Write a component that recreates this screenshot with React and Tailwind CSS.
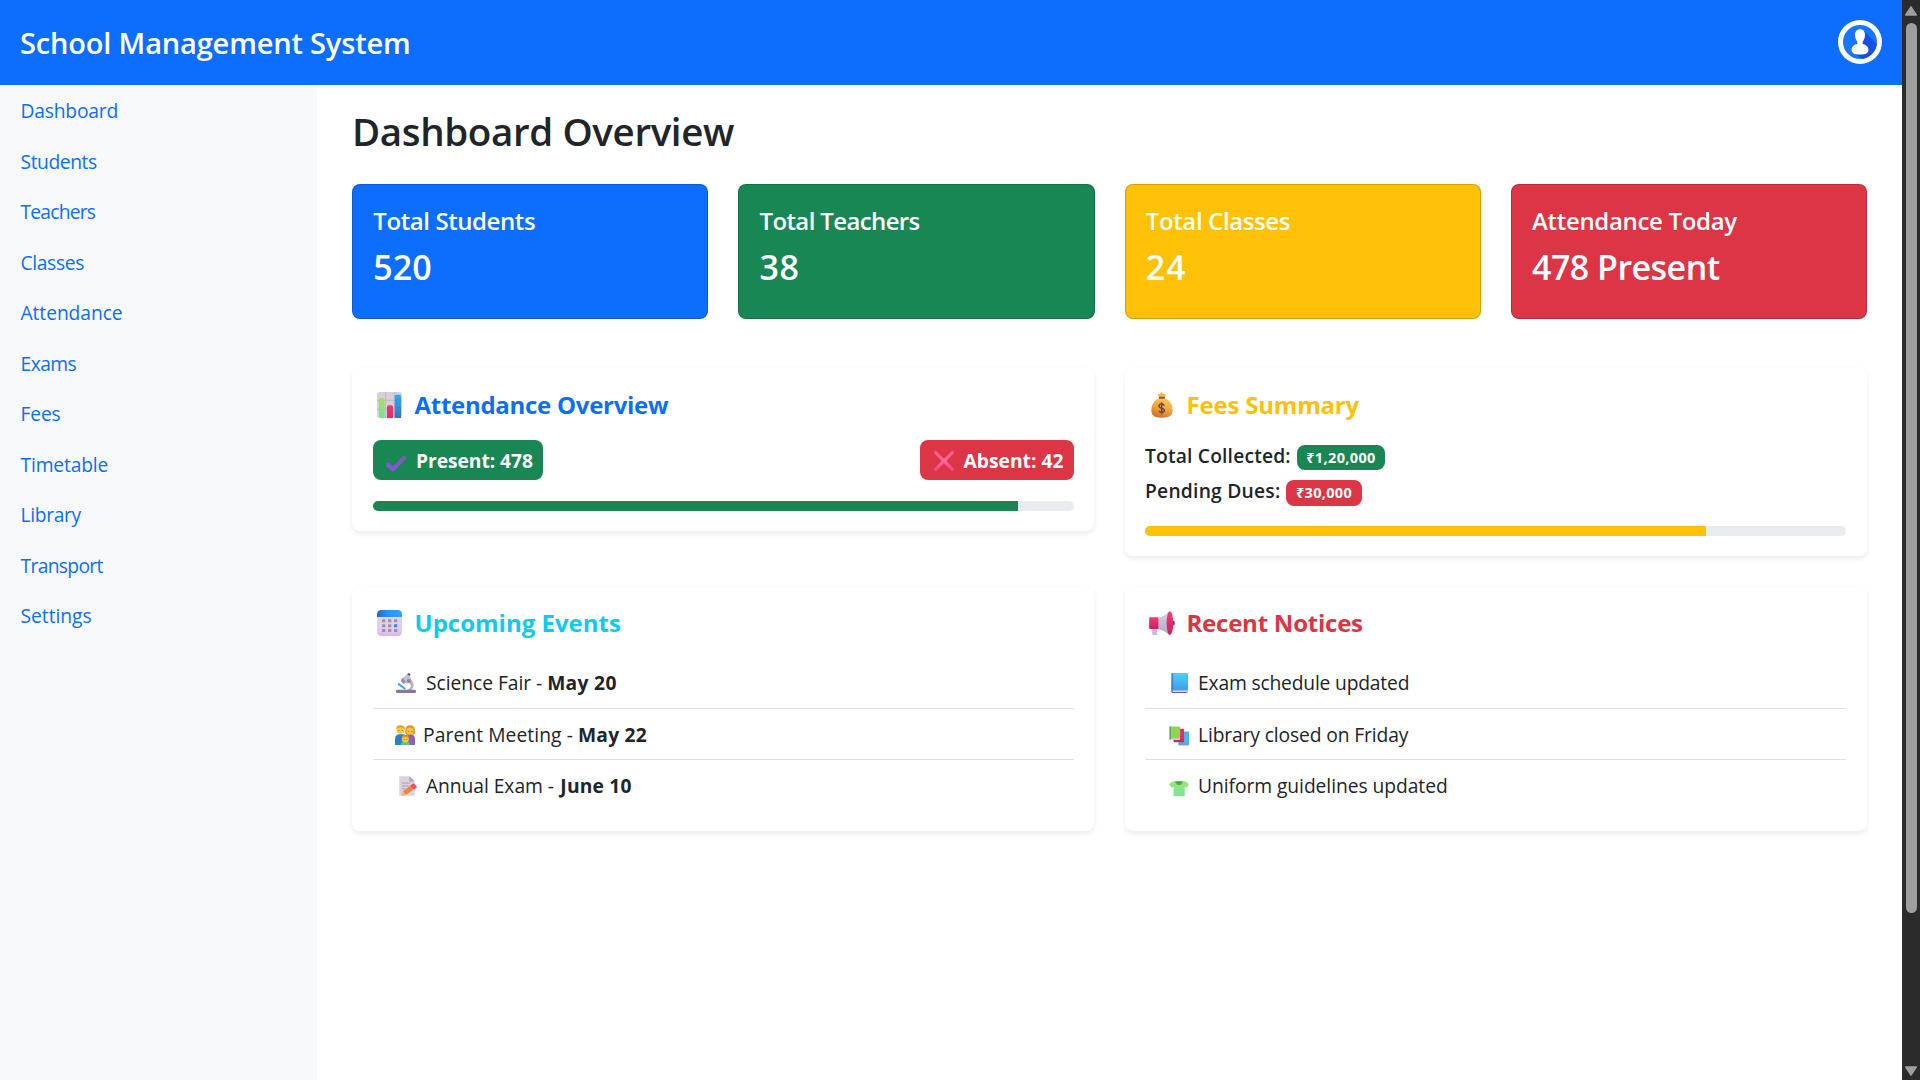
const nav = [
  ["Dashboard", "tracking-[-0.2px]"],
  ["Students", "tracking-[-0.43px]"],
  ["Teachers", "tracking-[-0.79px]"],
  ["Classes", "tracking-[-0.36px]"],
  ["Attendance", "tracking-[-0.08px]"],
  ["Exams", "tracking-[-0.57px]"],
  ["Fees", "tracking-[-0.18px]"],
  ["Timetable", "tracking-[-0.16px]"],
  ["Library", "tracking-[-0.35px]"],
  ["Transport", "tracking-[-0.67px]"],
  ["Settings", "tracking-[-0.03px]"],
];

const stats = [
  { label: "Total Students", value: "520", bg: "bg-[#0d6efd]", lt: "tracking-[-0.41px]", vt: "tracking-normal" },
  { label: "Total Teachers", value: "38", bg: "bg-[#198754]", lt: "tracking-[-0.63px]", vt: "tracking-[0.5px]" },
  { label: "Total Classes", value: "24", bg: "bg-[#ffc107]", lt: "tracking-[-0.38px]", vt: "tracking-[1px]" },
  { label: "Attendance Today", value: "478 Present", bg: "bg-[#dc3545]", lt: "tracking-[-0.32px]", vt: "tracking-[-0.54px]" },
];

function Avatar() {
  return (
    <svg className="mb-px h-11 w-11" viewBox="0 0 44 44">
      <defs>
        <clipPath id="disc"><circle cx="22" cy="22" r="17" /></clipPath>
      </defs>
      <circle cx="22" cy="22" r="22" fill="#fff" />
      <circle cx="22" cy="22" r="17" fill="#1677fb" />
      <path d="M26 11 L42 27 L32 44 L14 32 Z" fill="#1450e6" clipPath="url(#disc)" />
      <path d="M22 9.300c3.100 0 5 2.100 5 5.400 0 2.900-.9 5.200-2.300 6.700v2.600c3.200.9 5.700 2.300 5.700 5.800 0 3.600-2.600 4.700-8.400 4.700s-8.400-1.100-8.400-4.700c0-3.500 2.500-4.900 5.700-5.800v-2.600c-1.400-1.500-2.300-3.800-2.300-6.700 0-3.300 1.900-5.400 5-5.400z" fill="#fff" />
    </svg>
  );
}

function ChartIcon() {
  return (
    <svg className="ml-1 h-[26px] w-[25px]" viewBox="81 96 75 78">
      <defs>
        <linearGradient id="cg" x1="0" y1="0" x2="0" y2="1"><stop offset="0" stopColor="#b0dc55" /><stop offset="1" stopColor="#6ee894" /></linearGradient>
        <linearGradient id="cr" x1="0" y1="0" x2="0" y2="1"><stop offset="0" stopColor="#ea3a63" /><stop offset="1" stopColor="#f0256f" /></linearGradient>
        <linearGradient id="cb" x1="0" y1="0" x2="0" y2="1"><stop offset="0" stopColor="#35a7ee" /><stop offset="1" stopColor="#3573c4" /></linearGradient>
      </defs>
      <rect x="81" y="96" width="75" height="78" rx="9" fill="#d6d0dc" />
      <path d="M107 96v78M133 96v78M81 121h75M81 148h75" stroke="#b2aaba" strokeWidth="2" />
      <path d="M87 174v-55q0-5 5-5h7q5 0 5 5v55z" fill="url(#cg)" />
      <path d="M111 174v-33q0-5 5-5h8q5 0 5 5v33z" fill="url(#cr)" />
      <path d="M134 174v-65q0-5 5-5h9q5 0 5 5v65z" fill="url(#cb)" />
    </svg>
  );
}

function MoneyIcon() {
  return (
    <svg className="ml-1.5 h-[26px] w-[22px]" viewBox="94 97 66 78">
      <defs>
        <linearGradient id="mb" x1="0.7" y1="0" x2="0.3" y2="1"><stop offset="0" stopColor="#ffc94d" /><stop offset="0.55" stopColor="#eea23c" /><stop offset="1" stopColor="#d2672f" /></linearGradient>
      </defs>
      <path d="M118 114l-4-11 6 1 6-7 6 7 7-1-4 11z" fill="#f9b83c" />
      <path d="M119 116C104 121 95 136 95 152c0 16 10 22 32 22s32-6 32-22c0-16-9-31-24-36z" fill="url(#mb)" />
      <rect x="117" y="111" width="19" height="6" rx="3" fill="#87505a" />
      <path d="M134 138c-2-4-5-5-8-5-5 0-8 2-8 6 0 9 16 4 16 13 0 4-3 6-8 6-4 0-7-2-8-5M126 128v36" fill="none" stroke="#6e4649" strokeWidth="4.500" />
    </svg>
  );
}

function CalendarIcon() {
  const xs = [96, 114, 132];
  const ys = [118, 133, 147];
  return (
    <svg className="ml-1 h-[26px] w-[25px]" viewBox="81 90 75 78">
      <defs>
        <linearGradient id="ch" x1="0" y1="0" x2="1" y2="0"><stop offset="0" stopColor="#2b63c8" /><stop offset="0.400" stopColor="#2690f5" /><stop offset="1" stopColor="#35a3fb" /></linearGradient>
        <linearGradient id="cbg" x1="0" y1="0" x2="0" y2="1"><stop offset="0" stopColor="#dcd8e6" /><stop offset="0.800" stopColor="#e0cdee" /><stop offset="1" stopColor="#d9b3e8" /></linearGradient>
      </defs>
      <rect x="81" y="90" width="75" height="78" rx="13" fill="url(#cbg)" />
      <path d="M81 111v-7q0-14 14-14h47q14 0 14 14v7z" fill="url(#ch)" />
      {ys.map((y, j) => xs.map((x, i) => (
        <rect key={`${i}${j}`} x={x} y={y} width="10" height="9" rx="1" fill={i === 2 && j === 1 ? "#2a8df2" : "#9d92aa"} />
      )))}
    </svg>
  );
}

function MegaphoneIcon() {
  return (
    <svg className="ml-1 h-[24px] w-[26px]" viewBox="87 92 78 73">
      <defs>
        <linearGradient id="mg" x1="0" y1="0" x2="0" y2="1"><stop offset="0" stopColor="#d5d3dc" /><stop offset="1" stopColor="#b5a6ce" /></linearGradient>
        <linearGradient id="mr" x1="0" y1="0" x2="0" y2="1"><stop offset="0" stopColor="#f43e6b" /><stop offset="1" stopColor="#c61f68" /></linearGradient>
      </defs>
      <path d="M96 146h15v15q0 4-4 4h-7q-4 0-4-4z" fill="#c9bcdc" />
      <path d="M112 113q20-3 36-20v72q-16-15-36-18z" fill="url(#mg)" />
      <rect x="87" y="111" width="28" height="36" rx="3" fill="url(#mr)" />
      <ellipse cx="160" cy="129" rx="5" ry="7" fill="#57505f" />
      <ellipse cx="150" cy="129" rx="10" ry="36" fill="url(#mr)" />
    </svg>
  );
}

function CheckIcon() {
  return (
    <svg className="ml-[13px] mt-[7px] h-4 w-5" viewBox="109 286 60 48">
      <defs><linearGradient id="ck" x1="0" y1="1" x2="1" y2="0"><stop offset="0" stopColor="#8f52e8" /><stop offset="1" stopColor="#7560b4" /></linearGradient></defs>
      <path d="M115 312l15 14 33-34" fill="none" stroke="url(#ck)" strokeWidth="12" strokeLinecap="round" strokeLinejoin="round" />
    </svg>
  );
}

function CrossIcon() {
  return (
    <svg className="ml-[14px] mt-[2px] h-5 w-5" viewBox="101 92 60 60">
      <defs><linearGradient id="cx" x1="0" y1="0" x2="0" y2="1"><stop offset="0" stopColor="#fb5a80" /><stop offset="0.500" stopColor="#ff6a9e" /><stop offset="1" stopColor="#f3497c" /></linearGradient></defs>
      <path d="M106 97l50 50M156 97l-50 50" fill="none" stroke="url(#cx)" strokeWidth="10" strokeLinecap="round" />
    </svg>
  );
}

function MicroscopeIcon() {
  return (
    <svg className="ml-[23px] h-5 w-5" viewBox="140 279 60 60">
      <path d="M173 295c14 2 20 10 20 20 0 8-4 13-9 16h-14c9-3 14-7 14-14 0-6-4-10-13-12z" fill="#b9b2c4" />
      <path d="M163 291l12-9 10 12-12 17-14-2-4-8z" fill="#c6c0ce" />
      <path d="M160 293l10 13-8 6-8-10z" fill="#9b92a8" />
      <path d="M173 283l6-4 5 4-3 5z" fill="#5f5569" />
      <circle cx="178" cy="303" r="6" fill="#8f84a0" />
      <path d="M146 311l22 16" stroke="#37a4ee" strokeWidth="6" />
      <rect x="140" y="329" width="60" height="10" rx="4" fill="#8d74a5" />
    </svg>
  );
}

function FamilyIcon() {
  return (
    <svg className="ml-[22px] mt-0.5 h-5 w-5" viewBox="135 434 60 60">
      <path d="M135 494v-17q0-15 15-15h8q12 0 12 15v17z" fill="#2580cf" />
      <path d="M164 494v-20q2-12 15-12 16 0 16 15v17z" fill="#8a62b8" />
      <path d="M166 452q-1-17 14-17t15 17q2 7-4 11h-22q-4-4-3-11z" fill="#e8962a" />
      <circle cx="180" cy="452" r="10" fill="#fcc63c" />
      <circle cx="152" cy="449" r="12" fill="#fdcb42" />
      <path d="M139 447q-2-12 12-12t14 12q-7-6-13-6t-13 6z" fill="#eb9f24" />
      <path d="M147 449v2M157 449v2M175 452v2M185 452v2" stroke="#6e4727" strokeWidth="3" />
      <path d="M152 494q1-12 14-12t14 12z" fill="#57c984" />
      <circle cx="166" cy="476" r="10.500" fill="#fdc83e" />
      <path d="M155 474q-1-10 11-10t11 10q-5-4-11-4t-11 4z" fill="#e28e22" />
      <path d="M162 476v2M170 476v2" stroke="#6e4727" strokeWidth="3" />
    </svg>
  );
}

function MemoIcon() {
  return (
    <svg className="ml-[26px] mt-0.5 h-5 w-[18px]" viewBox="146 588 55 60">
      <path d="M147 588h31l16 16v44h-47z" fill="#d9d2e0" />
      <path d="M178 588l16 16h-16z" fill="#ada3b8" />
      <path d="M155 609h24M155 618h22M155 627h14" stroke="#9d93a8" strokeWidth="2.500" />
      <path d="M158 635l22-18 11 11-23 17-12 2z" fill="#f58435" />
      <path d="M180 617l7-6q3-2 6 1l6 6q3 3 0 5l-8 6z" fill="#f6485f" />
      <path d="M158 635l10 10-12 3z" fill="#fbb57c" />
    </svg>
  );
}

function BookIcon() {
  return (
    <svg className="ml-[25.500px] h-5 w-[17px]" viewBox="151 279 51 60">
      <defs><linearGradient id="bk" x1="0" y1="0" x2="0" y2="1"><stop offset="0" stopColor="#55cff2" /><stop offset="1" stopColor="#379fee" /></linearGradient></defs>
      <rect x="152" y="279" width="49" height="60" rx="4" fill="#4d63c4" />
      <rect x="156" y="331" width="45" height="5" fill="#dcd9f5" />
      <rect x="152" y="279" width="49" height="51" rx="3" fill="url(#bk)" />
      <path d="M156 280v50" stroke="#3283c9" strokeWidth="3" />
    </svg>
  );
}

function BooksIcon() {
  return (
    <svg className="ml-[23.500px] mt-[3px] h-5 w-5" viewBox="146 437 61 60">
      <rect x="175" y="453" width="32" height="42" rx="2" fill="#48b8f3" />
      <path d="M175 488h32v4q0 3-3 3h-29z" fill="#8295dc" />
      <path d="M160 445h32v40h-32z" fill="#e22f5f" />
      <path d="M160 478h30v8h-28z" fill="#a93267" />
      <rect x="147" y="438" width="33" height="41" rx="2" fill="#8fd552" />
      <path d="M147 474h33l-2 5h-28q-3 0-3-3z" fill="#d6c9e2" />
      <path d="M150 438v40" stroke="#5fa368" strokeWidth="4" />
    </svg>
  );
}

function ShirtIcon() {
  return (
    <svg className="ml-[23.500px] mt-[6px] h-[17px] w-5" viewBox="146 599 61 50">
      <defs><linearGradient id="sh" x1="0" y1="0" x2="0" y2="1"><stop offset="0" stopColor="#a5e36a" /><stop offset="0.500" stopColor="#8be48a" /><stop offset="1" stopColor="#7be593" /></linearGradient></defs>
      <path d="M164 601q12 4 25 0 10 0 18 10l-7 11-6-3v26q0 3-3 3h-28q-3 0-3-3v-26l-6 3-8-11q8-10 18-10z" fill="url(#sh)" />
      <path d="M165 601q12 4 23 0 0 13-11.500 13T165 601z" fill="#5fb551" />
      <path d="M168 602q8 3 17 0-1 7-8.500 7T168 602z" fill="#3f9a4b" />
    </svg>
  );
}

function Panel({ side, children }) {
  const pad = side === "left" ? "pl-[21px] pr-5" : "pl-5 pr-[21px]";
  return (
    <section className={"self-start rounded-lg bg-white pt-5 pb-5 shadow-[0_2.500px_5px_rgba(0,0,0,0.075)] " + pad}>
      {children}
    </section>
  );
}

function Title({ icon, className, children }) {
  return (
    <h5 className={"flex items-center text-[24px] font-bold whitespace-pre " + className}>
      <span className="w-[41.500px] shrink-0">{icon}</span>
      {children}
    </h5>
  );
}

function Item({ icon, last, gutter = "w-[53px]", drop = "pt-0.5", children }) {
  return (
    <li className={"flex h-[51px] items-center whitespace-pre text-[19.250px] leading-[48px] " + (last ? "pb-px" : "border-b border-[#dee2e6]")}>
      <span className={"shrink-0 " + gutter}>{icon}</span>
      <span className={drop}>{children}</span>
    </li>
  );
}

function Progress({ fill, className }) {
  return (
    <div className={"h-2.5 overflow-hidden rounded-[5px] bg-[#e9ecef] " + className}>
      <div className={"h-full " + fill} />
    </div>
  );
}

export default function App() {
  return (
    <div className="flex h-[1080px] w-[1920px] overflow-hidden bg-white font-['Open_Sans','Noto_Sans',sans-serif] text-[#212529]">
      <div className="w-[1902px]">
        <header className="flex h-[85px] items-center justify-between bg-[#0d6efd] pr-5 pl-5">
          <h4 className="text-[29px] font-semibold tracking-[-0.170px] text-white">School Management System</h4>
          <Avatar />
        </header>
        <div className="flex">
          <nav className="h-[995px] w-[317px] bg-[#f8f9fa] pt-[1.500px] pl-[20.500px] text-[19.250px] text-[#0d6efd]">
            {nav.map(([name, track]) => (
              <a key={name} className={"flex h-[50.500px] items-center " + track}>{name}</a>
            ))}
          </nav>
          <main className="flex-1 px-[35px]">
            <h2 className="h-[99px] pt-[18px] text-[38.500px] leading-[56px] font-semibold tracking-[-0.370px]">Dashboard Overview</h2>
            <div className="grid grid-cols-4 gap-[30px]">
              {stats.map((s) => (
                <div key={s.label} className={"h-[135px] rounded-lg border border-black/[0.175] pt-[21px] pl-[20.300px] font-semibold text-white " + s.bg}>
                  <h5 className={"text-[24px] leading-[30px] " + s.lt}>{s.label}</h5>
                  <h3 className={"mt-[10px] text-[34px] leading-[42px] " + s.vt}>{s.value}</h3>
                </div>
              ))}
            </div>

            <div className="mt-[49px] grid grid-cols-[742px_742px] gap-[31px]">
              <Panel side="left">
                <Title icon={<ChartIcon />} className="h-[34px] tracking-[-0.280px] text-[#0d6efd]">Attendance Overview</Title>
                <div className="mt-[18px] flex justify-between text-[19.250px] leading-10 font-bold whitespace-pre text-white">
                  <div className="flex h-10 w-[170px] items-center rounded-lg bg-[#198754]">
                    <span className="w-[43px]"><CheckIcon /></span>
                    <span className="pt-0.5 tracking-[-0.060px]">Present: 478</span>
                  </div>
                  <div className="flex h-10 w-[154px] items-center rounded-lg bg-[#dc3545]">
                    <span className="w-[43.500px]"><CrossIcon /></span>
                    <span className="pt-0.5">Absent: 42</span>
                  </div>
                </div>
                <Progress className="mt-[21px]" fill="w-[92%] bg-[#198754]" />
              </Panel>

              <Panel side="right">
                <Title icon={<MoneyIcon />} className="h-[34px] tracking-[-0.200px] text-[#ffc107]">Fees Summary</Title>
                <div className="mt-4 text-[19.250px] font-semibold whitespace-pre">
                  <div className="flex h-[35px] items-center">
                    <span className="w-[152px] pt-0.5 tracking-[0.170px]">Total Collected:</span>
                    <span className="mt-1 h-[25px] w-[88px] rounded-lg bg-[#198754] text-center text-[14.500px] leading-[25px] font-bold tracking-[0.360px] text-white">₹1,20,000</span>
                  </div>
                  <div className="flex h-[35px] items-center">
                    <span className="w-[141px] pt-0.5 tracking-[0.230px]">Pending Dues:</span>
                    <span className="mt-[5px] h-[26px] w-[76px] rounded-lg bg-[#dc3545] text-center text-[14.500px] leading-[26px] font-bold tracking-[0.330px] text-white">₹30,000</span>
                  </div>
                </div>
                <Progress className="mt-[18px]" fill="w-4/5 bg-[#ffc107]" />
              </Panel>

              <Panel side="left">
                <Title icon={<CalendarIcon />} className="h-8 text-[#0dcaf0]">Upcoming Events</Title>
                <ul className="mt-[19px]">
                  <Item icon={<MicroscopeIcon />} drop="pt-0">
                    <span className="tracking-[-0.050px]">Science Fair -</span>
                    <strong className="ml-[5px] tracking-[0.310px]">May 20</strong>
                  </Item>
                  <Item icon={<FamilyIcon />} gutter="w-[50px]">
                    <span className="tracking-[0.080px]">Parent Meeting -</span>
                    <strong className="ml-[5px] tracking-[0.190px]">May 22</strong>
                  </Item>
                  <Item icon={<MemoIcon />} gutter="w-[53px]" last>
                    <span className="tracking-[-0.060px]">Annual Exam -</span>
                    <strong className="ml-[6.500px] tracking-[0.160px]">June 10</strong>
                  </Item>
                </ul>
              </Panel>

              <Panel side="right">
                <Title icon={<MegaphoneIcon />} className="h-8 tracking-[-0.230px] text-[#dc3545]">Recent Notices</Title>
                <ul className="mt-[19px]">
                  <Item icon={<BookIcon />} drop="pt-0"><span className="tracking-[-0.180px]">Exam schedule updated</span></Item>
                  <Item icon={<BooksIcon />}><span className="tracking-[-0.130px]">Library closed on Friday</span></Item>
                  <Item icon={<ShirtIcon />} last><span className="tracking-[-0.060px]">Uniform guidelines updated</span></Item>
                </ul>
              </Panel>
            </div>
          </main>
        </div>
      </div>
      <div className="flex w-[18px] flex-col items-center bg-[#2b2b2b] pt-1.5 pb-1">
        <svg className="h-2.5 w-3" viewBox="0 0 12 10"><path d="M6 .8L11.300 9H.7z" fill="#9f9f9f" stroke="#9f9f9f" strokeLinejoin="round" strokeWidth="1.400" /></svg>
        <div className="mt-[7px] h-[890px] w-[11px] rounded-full bg-[#9f9f9f]" />
        <svg className="mt-auto h-2.5 w-3" viewBox="0 0 12 10"><path d="M6 9.200L.7 1h10.600z" fill="#9f9f9f" stroke="#9f9f9f" strokeLinejoin="round" strokeWidth="1.400" /></svg>
      </div>
    </div>
  );
}
